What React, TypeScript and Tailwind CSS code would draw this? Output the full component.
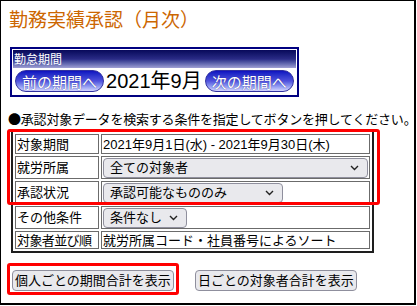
import React from "react";

function PillButton({ children }: { children: React.ReactNode }) {
  return (
    <div className="shrink-0 whitespace-nowrap h-[22px] flex items-center rounded-full border border-[#3030a0] bg-linear-to-b from-[#1010c0] via-[#5050dc] to-[#d4d4ff] px-[6px] text-[15px] leading-none text-white font-['Noto_Sans_CJK_JP',sans-serif] [text-shadow:0_0_1px_#202080]">
      {children}
    </div>
  );
}

function Chevron() {
  return (
    <svg width="9" height="6" viewBox="0 0 9 6" className="shrink-0">
      <polyline points="1,1 4.5,4.5 8,1" fill="none" stroke="#222" strokeWidth="1.4" />
    </svg>
  );
}

function Select({ label, width }: { label: string; width: string }) {
  return (
    <div
      className={`${width} h-[20px] flex items-center justify-between rounded-[4px] border border-[#8f8f9d] bg-[#e9e9ed] pl-[6px] pr-[8px] text-[13px] leading-none whitespace-nowrap`}
    >
      <span>{label}</span>
      <Chevron />
    </div>
  );
}

const cell = "border border-[#6b6b6b] flex items-center text-[13px] leading-none whitespace-nowrap";

export default function App() {
  return (
    <div className="relative w-[417px] h-[306px] bg-white text-black font-['Liberation_Sans','Noto_Sans_CJK_JP',sans-serif]">
      <div className="w-[416px] h-[305px] border-l border-t border-r-2 border-b-2 border-black pl-[8px] pt-[7px]">
        {/* title */}
        <h1 className="text-[19px] leading-[22px] text-[#cc6600] font-['Noto_Sans_CJK_JP',sans-serif]">
          勤務実績承認（月次）
        </h1>

        {/* period panel */}
        <div className="mt-[17px] ml-[1px] w-[289px] border-2 border-[#000080] p-[1px]">
          <div className="h-[18px] bg-linear-to-b from-[#08085a] via-[#2a2a86] to-[#a0a0d4] pl-[1px] text-[12px] leading-[18px] text-white font-['Noto_Sans_CJK_JP',sans-serif]">
            勤怠期間
          </div>
          <div className="flex h-[26px] items-center pl-[2px] whitespace-nowrap">
            <PillButton>前の期間へ</PillButton>
            <span className="shrink-0 ml-[2px] text-[20px] leading-none">2021年9月</span>
            <div className="ml-[3px] shrink-0">
              <PillButton>次の期間へ</PillButton>
            </div>
          </div>
        </div>

        {/* instruction */}
        <p className="mt-[13px] -ml-[1px] text-[13px] leading-[18px] tracking-[-0.2px] whitespace-nowrap">
          <span className="font-['Noto_Sans_CJK_JP',sans-serif]">●</span>
          承認対象データを検索する条件を指定してボタンを押してください。
        </p>

        {/* condition table */}
        <div className="mt-[1px] ml-[2px] w-[363px] border-2 border-[#1e1e1e] p-[2px]">
          <div className="grid grid-cols-[84px_1fr] grid-rows-[20px_23px_23px_23px_18px] gap-[2px]">
            <div className={`${cell} pl-[1px]`}>対象期間</div>
            <div className={`${cell} pl-[1px]`}>2021年9月1日(水) - 2021年9月30日(木)</div>

            <div className={`${cell} pl-[1px]`}>就労所属</div>
            <div className={`${cell} p-[1px]`}>
              <Select label="全ての対象者" width="w-full" />
            </div>

            <div className={`${cell} pl-[1px]`}>承認状況</div>
            <div className={`${cell} p-[1px]`}>
              <Select label="承認可能なもののみ" width="w-[180px]" />
            </div>

            <div className={`${cell} pl-[1px]`}>その他条件</div>
            <div className={`${cell} p-[1px]`}>
              <Select label="条件なし" width="w-[84px]" />
            </div>

            <div className={`${cell} pl-[1px] tracking-[-0.6px]`}>対象者並び順</div>
            <div className={`${cell} pl-[1px]`}>就労所属コード・社員番号によるソート</div>
          </div>
        </div>

        {/* action buttons */}
        <div className="mt-[17px] ml-[3px] flex gap-[21px]">
          <button className="h-[21px] rounded-[4px] border border-[#8f8f9d] bg-[#e9e9ed] px-[2px] text-[13px] leading-none whitespace-nowrap">
            個人ごとの期間合計を表示
          </button>
          <button className="h-[21px] rounded-[4px] border border-[#8f8f9d] bg-[#e9e9ed] px-[2px] text-[13px] leading-none whitespace-nowrap">
            日ごとの対象者合計を表示
          </button>
        </div>
      </div>

      {/* red annotation boxes */}
      <div className="absolute left-[7px] top-[129px] h-[76px] w-[373px] rounded-[3px] border-[3px] border-[#ff0000]" />
      <div className="absolute left-[7px] top-[263px] h-[32px] w-[172px] rounded-[3px] border-[3px] border-[#ff0000]" />
    </div>
  );
}
